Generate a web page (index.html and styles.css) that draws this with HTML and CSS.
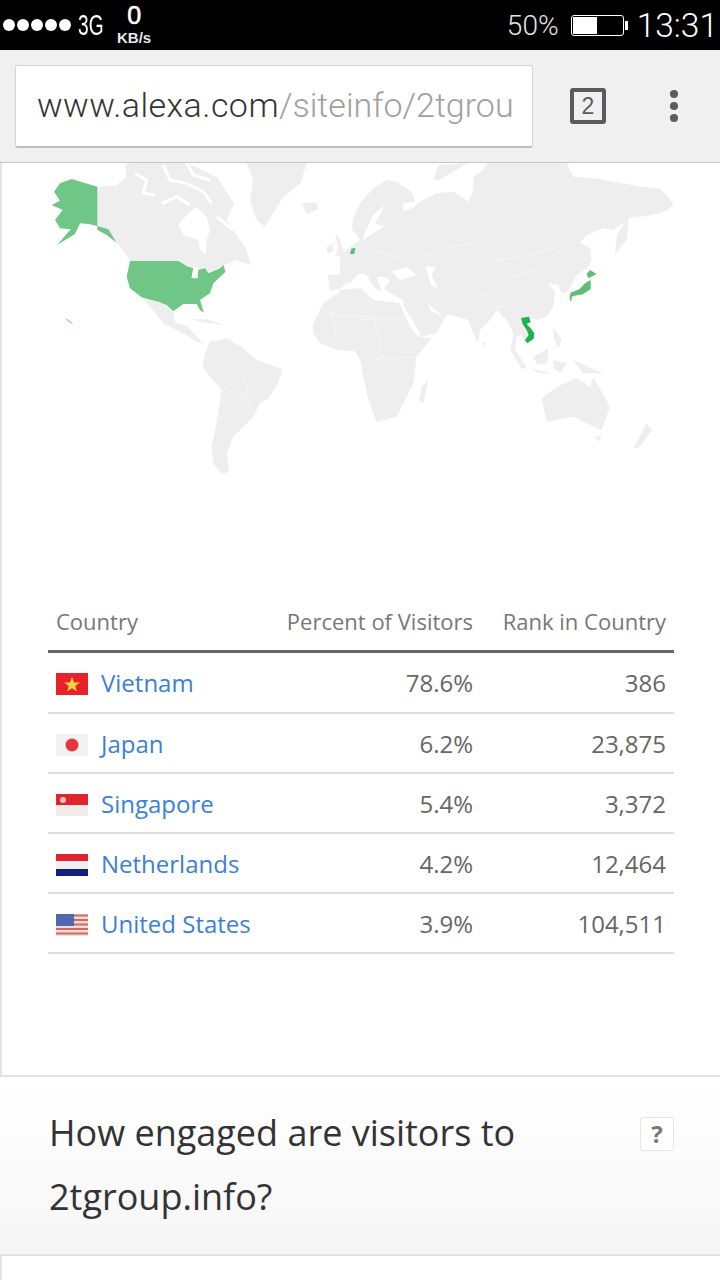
FILE: index.html
```html
<!DOCTYPE html>
<html lang="en">
<head>
    <meta charset="UTF-8">
    <meta name="viewport" content="width=device-width, initial-scale=1.0">
    <title>Alexa - 2tgroup.info</title>
    <link rel="stylesheet" href="styles.css">
</head>
<body>

    <!-- Status bar -->
    <div class="status-bar">
        <div class="status-left">
            <div class="signal"><i></i><i></i><i></i><i></i><i></i></div>
            <span class="network">3G</span>
            <div class="speed"><b>0</b><small>KB/s</small></div>
        </div>
        <div class="status-right">
            <span class="percent">50%</span>
            <div class="battery"><div class="battery-level"></div></div>
            <span class="clock">13:31</span>
        </div>
    </div>

    <!-- Browser toolbar -->
    <div class="toolbar">
        <div class="url-box"><span class="url-host">www.alexa.com</span><span class="url-path">/siteinfo/2tgrou</span></div>
        <div class="tab-count">2</div>
        <div class="menu-dots"><i></i><i></i><i></i></div>
    </div>

    <div class="page">
        <!-- World map -->
        <svg class="world-map" viewBox="0 163 720 420" xmlns="http://www.w3.org/2000/svg">
            <g transform="translate(30 160) scale(.33333)">
                <g fill="#eeeeee">
                    <!-- Canada -->
                    <path d="M202 80L260 75L290 50L285 12L330 8L470 8L560 50L612 130L590 180L650 270L662 315L620 300L585 315L540 335L505 352L500 325L470 318L445 303L300 303L260 245L235 210L202 198Z"/>
                    <!-- Greenland, Iceland -->
                    <path d="M650 10L830 10L812 70L760 110L722 170L705 200L680 180L660 120L670 60Z"/>
                    <path d="M815 130L860 128L866 148L830 162Z"/>
                    <!-- Mexico, Central America, Caribbean -->
                    <path d="M335 412L385 425L410 435L430 455L436 490L470 498L500 530L522 552L500 545L460 520L400 490L368 450Z"/>
                    <path d="M480 478L530 478L585 495L530 488Z"/>
                    <!-- South America -->
                    <path d="M540 545L590 535L640 565L680 600L757 627L745 670L715 715L690 730L670 770L640 800L610 830L590 880L598 935L575 942L550 910L545 860L565 760L575 690L540 650L518 620L525 580Z"/>
                    <!-- West Europe, West Africa, British Isles, Norway -->
                    <path d="M950 290L1000 262L1000 340L965 345L935 385L900 392L893 345L930 345L965 310Z"/>
                    <path d="M850 490L880 430L930 395L1000 385L1000 575L920 570L870 550L850 520Z"/>
                    <path d="M915 215L930 240L945 285L915 290L925 260Z"/>
                    <path d="M890 262L908 250L908 275L892 280Z"/>
                    <path d="M965 195L990 160L1000 160L1000 220L970 218Z"/>
                </g>
                <!-- Canada water -->
                <path d="M445 195L470 165L500 140L530 170L540 210L530 240L528 282L510 270L505 240L460 225Z" fill="#ffffff"/>
                <path d="M315 40L350 60L340 100L375 105M400 15L420 60L470 70L520 95L545 130M470 8L490 45L540 60M560 170L610 210M480 135L440 110L395 130" fill="none" stroke="#ffffff" stroke-width="9"/>
                <path d="M490 325L505 320L505 352L485 355Z" fill="#ffffff"/>
                <g fill="#6fc686">
                    <!-- Alaska -->
                    <path d="M202 80L125 57L90 70L72 95L90 122L65 135L98 150L75 180L90 205L122 208L82 254L135 222L150 190L175 192L202 198Z"/>
                    <path d="M202 198L235 208L260 248L230 225L202 210Z"/>
                    <!-- United States -->
                    <path d="M300 303L445 303L470 318L490 325L484 355L503 355L505 330L525 325L535 340L570 325L580 315L587 335L550 370L540 400L510 420L522 458L510 450L500 432L460 432L430 454L410 435L385 425L335 412L300 385L290 350Z"/>
                    <path d="M105 475L112 478L130 492L120 488Z"/>
                </g>
                <path d="M880 480L905 455L960 490L1000 480M905 455L920 530L950 560M950 420L960 490M570 600L600 590L640 640L660 740M575 690L610 670L650 720M565 770L620 780M575 640L530 600" fill="none" stroke="#ffffff" stroke-width="1.500"/>
            </g>
            <g transform="translate(340 160) scale(.33333)">
                <g fill="#eeeeee">
                    <!-- Eurasia -->
                    <path d="M0 290L30 262L60 240L45 215L38 180L60 130L100 85L140 60L170 65L215 95L225 125L190 130L190 155L215 145L250 120L290 100L340 95L385 125L400 95L400 50L430 30L440 10L680 10L700 50L760 55L850 70L900 80L960 85L1000 130L985 150L940 165L870 175L820 210L790 205L740 225L720 250L750 262L755 300L745 320L710 345L682 395L665 400L655 375L625 370L645 395L640 440L620 470L590 480L570 472L545 476L550 490L580 520L575 535L555 550L545 525L530 530L525 570L560 620L545 628L512 570L520 520L500 480L470 450L450 480L420 510L415 550L395 510L385 480L320 462L290 520L240 530L190 440L190 420L150 398L132 385L150 362L130 350L110 350L125 395L105 385L80 345L60 335L30 370L0 370Z"/>
                    <!-- Africa -->
                    <path d="M0 390L60 385L100 420L180 430L210 500L235 530L275 535L230 590L220 670L170 770L110 785L85 720L60 600L40 565L0 560Z"/>
                    <!-- Islands -->
                    <path d="M380 10L350 30L295 60L280 60L295 15Z"/>
                    <path d="M860 180L830 225L825 282L860 240L866 190Z"/>
                    <path d="M265 660L250 730L237 722L245 680Z"/>
                    <path d="M580 590L625 565L622 610L590 612Z"/>
                    <path d="M640 500L665 540L655 565L640 530Z"/>
                    <path d="M565 625L640 640L600 640Z"/>
                    <path d="M640 600L680 610L660 640L640 625Z"/>
                    <path d="M700 600L790 640L730 640Z"/>
                    <path d="M425 545L437 550L430 562Z"/>
                    <!-- Australia -->
                    <path d="M605 715L650 680L710 655L750 680L760 650L810 740L785 810L740 790L700 770L620 785Z"/>
                    <path d="M765 828L785 830L775 846Z"/>
                    <path d="M935 810L900 860L880 866L920 790Z"/>
                </g>
                <!-- Inland water -->
                <g fill="#ffffff">
                    <path d="M135 135L105 190L130 200L70 240L75 215L100 165Z"/>
                    <path d="M155 335L200 320L230 345L180 360Z"/>
                    <path d="M258 320L285 320L275 345L292 385L272 375Z"/>
                    <path d="M262 430L310 470L275 455Z"/>
                </g>
                <path d="M185 435L240 525" fill="none" stroke="#ffffff" stroke-width="6"/>
                <path d="M250 290L330 260L400 250L470 300L550 290L640 265L700 300M470 300L520 350L620 320M300 340L420 400L520 440M100 270L200 300M60 480L230 470M90 600L230 590M110 700L220 650M430 450L490 440M0 470L100 470L130 590" fill="none" stroke="#ffffff" stroke-width="1.500"/>
                <!-- Highlighted countries -->
                <path d="M35 265L47 265L42 282L30 282Z" fill="#58bd72"/>
                <g fill="#5cc078">
                    <path d="M750 330L770 342L745 355L740 342Z"/>
                    <path d="M752 360L752 388L728 403L700 408L688 414L692 398L718 388L735 370Z"/>
                    <path d="M690 408L697 415L690 425Z"/>
                </g>
                <path d="M543 474L567 470L572 486L560 492L572 505L583 520L581 536L562 550L555 540L566 525L560 510L548 492Z" fill="#22b14c"/>
            </g>
        </svg>

        <!-- Country table -->
        <table class="country-table">
            <thead>
                <tr>
                    <th class="col-country">Country</th>
                    <th>Percent of Visitors</th>
                    <th>Rank in Country</th>
                </tr>
            </thead>
            <tbody>
                <tr>
                    <td class="col-country"><div class="country-cell">
                        <svg class="flag" viewBox="0 0 32 22"><rect width="32" height="22" fill="#e8222a"/><polygon points="16,4 18,9.5 24,9.5 19.2,13 21,18.5 16,15.2 11,18.5 12.8,13 8,9.5 14,9.5" fill="#f5d33c"/></svg>
                        <a href="#">Vietnam</a>
                    </div></td>
                    <td>78.6%</td>
                    <td>386</td>
                </tr>
                <tr>
                    <td class="col-country"><div class="country-cell">
                        <svg class="flag" viewBox="0 0 32 22"><rect width="32" height="22" fill="#f1f3f1"/><circle cx="16" cy="11" r="6.5" fill="#e8343c"/></svg>
                        <a href="#">Japan</a>
                    </div></td>
                    <td>6.2%</td>
                    <td>23,875</td>
                </tr>
                <tr>
                    <td class="col-country"><div class="country-cell">
                        <svg class="flag" viewBox="0 0 32 22"><rect width="32" height="22" fill="#f3eaea"/><rect width="32" height="11" fill="#e0262c"/><circle cx="7" cy="6" r="3" fill="#f6c8c8"/></svg>
                        <a href="#">Singapore</a>
                    </div></td>
                    <td>5.4%</td>
                    <td>3,372</td>
                </tr>
                <tr>
                    <td class="col-country"><div class="country-cell">
                        <svg class="flag" viewBox="0 0 32 22"><rect width="32" height="8" fill="#e0222c"/><rect y="7" width="32" height="8" fill="#f2eef2"/><rect y="15" width="32" height="7" fill="#14207a"/></svg>
                        <a href="#">Netherlands</a>
                    </div></td>
                    <td>4.2%</td>
                    <td>12,464</td>
                </tr>
                <tr>
                    <td class="col-country"><div class="country-cell">
                        <svg class="flag" viewBox="0 0 32 22"><rect width="32" height="22" fill="#f0dcd8"/><path d="M0 1.5H32M0 6H32M0 10.500H32M0 15H32M0 19.500H32" stroke="#d4685c" stroke-width="2.200"/><rect width="18" height="12" fill="#5068b0"/></svg>
                        <a href="#">United States</a>
                    </div></td>
                    <td>3.9%</td>
                    <td>104,511</td>
                </tr>
            </tbody>
        </table>

        <!-- Engagement heading -->
        <div class="section-head">
            <h2>How engaged are visitors to 2tgroup.info?</h2>
            <div class="help-box">?</div>
        </div>
    </div>

</body>
</html>
```

FILE: styles.css
```css
/* General */
body {
    margin: 0;
    padding: 0;
    width: 720px;
    height: 1280px;
    overflow: hidden;
    background-color: #ffffff;
    font-family: 'Open Sans', sans-serif;
}

/* Status bar */
.status-bar {
    height: 50px;
    background-color: #000000;
    color: #ffffff;
    display: flex;
    justify-content: space-between;
    align-items: center;
    font-family: 'Liberation Sans', sans-serif;
}

.status-left {
    display: flex;
    align-items: center;
    padding-left: 3px;
}

.signal {
    display: flex;
    gap: 2px;
}

.signal i {
    width: 12px;
    height: 12px;
    border-radius: 50%;
    background-color: #ffffff;
}

.network {
    font-size: 29px;
    margin-left: 7px;
    transform: scaleX(0.66);
    transform-origin: left center;
    width: 39px;
}

.speed {
    display: flex;
    flex-direction: column;
    align-items: center;
    gap: 3px;
    margin-bottom: 2px;
}

.speed b {
    font-size: 25px;
    line-height: 24px;
    font-weight: 400;
    -webkit-text-stroke: 0.6px #ffffff;
}

.speed small {
    font-size: 15px;
    line-height: 15px;
    font-weight: bold;
    color: #e8e8e8;
}

.status-right {
    display: flex;
    align-items: center;
    padding-right: 2px;
}

.percent {
    font-family: 'Roboto', sans-serif;
    font-weight: 300;
    font-size: 28px;
    color: #e4e4e4;
}

.battery {
    width: 49px;
    height: 17px;
    margin-left: 12px;
    margin-right: 13px;
    padding: 1px;
    border: 1px solid #ffffff;
    border-radius: 3px;
    position: relative;
}

.battery::after {
    content: '';
    position: absolute;
    right: -5px;
    top: 5px;
    width: 3px;
    height: 9px;
    background-color: #ffffff;
}

.battery-level {
    width: 50%;
    height: 100%;
    background-color: #ffffff;
}

.clock {
    font-family: 'Roboto', sans-serif;
    font-weight: 300;
    font-size: 33.500px;
}

/* Browser toolbar */
.toolbar {
    height: 112px;
    background-color: #f0f0f0;
    border-bottom: 1px solid #c4c4c4;
    display: flex;
    align-items: center;
    padding-left: 15px;
    box-sizing: content-box;
}

.url-box {
    width: 474px;
    height: 80px;
    padding: 0 21px;
    background-color: #ffffff;
    border: 1px solid #d4d4d4;
    border-bottom: 2px solid #bdbdbd;
    border-radius: 3px;
    font-family: 'Roboto', sans-serif;
    font-weight: 300;
    font-size: 34px;
    line-height: 78px;
    white-space: nowrap;
    overflow: hidden;
}

.url-host {
    color: #333333;
    letter-spacing: 0.45px;
}

.url-path {
    color: #a0a0a0;
}

.tab-count {
    width: 28px;
    height: 28px;
    margin-left: 37px;
    border: 4px solid #5c5c5c;
    border-radius: 3px;
    color: #5c5c5c;
    font-family: 'Liberation Sans', sans-serif;
    font-size: 23px;
    line-height: 28px;
    text-align: center;
}

.menu-dots {
    display: flex;
    flex-direction: column;
    gap: 4px;
    margin-left: 64px;
}

.menu-dots i {
    width: 8px;
    height: 8px;
    border-radius: 50%;
    background-color: #5c5c5c;
}

/* Page content */
.page {
    border-left: 2px solid #e4e4e4;
    height: 1117px;
}

.world-map {
    display: block;
    width: 720px;
    height: 420px;
    margin-left: -2px;
}

/* Country table */
.country-table {
    width: 626px;
    margin-left: 46px;
    border-collapse: collapse;
    color: #666666;
    font-size: 24px;
}

.country-table th {
    height: 68px;
    padding: 10px 8px 0;
    box-sizing: border-box;
    font-size: 22px;
    font-weight: 400;
    color: #777777;
    text-align: right;
    white-space: nowrap;
    vertical-align: middle;
    border-bottom: 3px solid #666666;
}

.country-table td {
    height: 60px;
    padding: 0 8px;
    box-sizing: border-box;
    text-align: right;
    border-bottom: 2px solid #dddddd;
}

.country-table tbody tr:first-child td {
    height: 62px;
}

.country-table .col-country {
    text-align: left;
}

.country-table th:nth-child(2) {
    width: 200px;
}

.country-table th:nth-child(3) {
    width: 193px;
}

.country-cell {
    display: flex;
    align-items: center;
    gap: 13px;
}

.country-table a {
    color: #3b7fd9;
    text-decoration: none;
}

.flag {
    width: 32px;
    height: 22px;
    margin-top: 3px;
    flex-shrink: 0;
    filter: blur(0.6px);
}

/* Section heading */
.section-head {
    margin-top: 121px;
    margin-left: -2px;
    height: 181px;
    padding: 24px 46px 0 49px;
    box-sizing: border-box;
    display: flex;
    justify-content: space-between;
    align-items: flex-start;
    border-top: 2px solid #e2e2e2;
    border-bottom: 2px solid #e2e2e2;
    background: linear-gradient(#ffffff, #f6f6f6);
}

.section-head h2 {
    width: 500px;
    margin: 0;
    font-size: 36px;
    font-weight: 400;
    line-height: 64px;
    color: #333333;
}

.help-box {
    width: 32px;
    height: 32px;
    margin-top: 16px;
    background-color: #ffffff;
    border: 1px solid #e6e6e6;
    border-radius: 3px;
    color: #777777;
    font-size: 24px;
    font-weight: 700;
    line-height: 32px;
    text-align: center;
}
```
